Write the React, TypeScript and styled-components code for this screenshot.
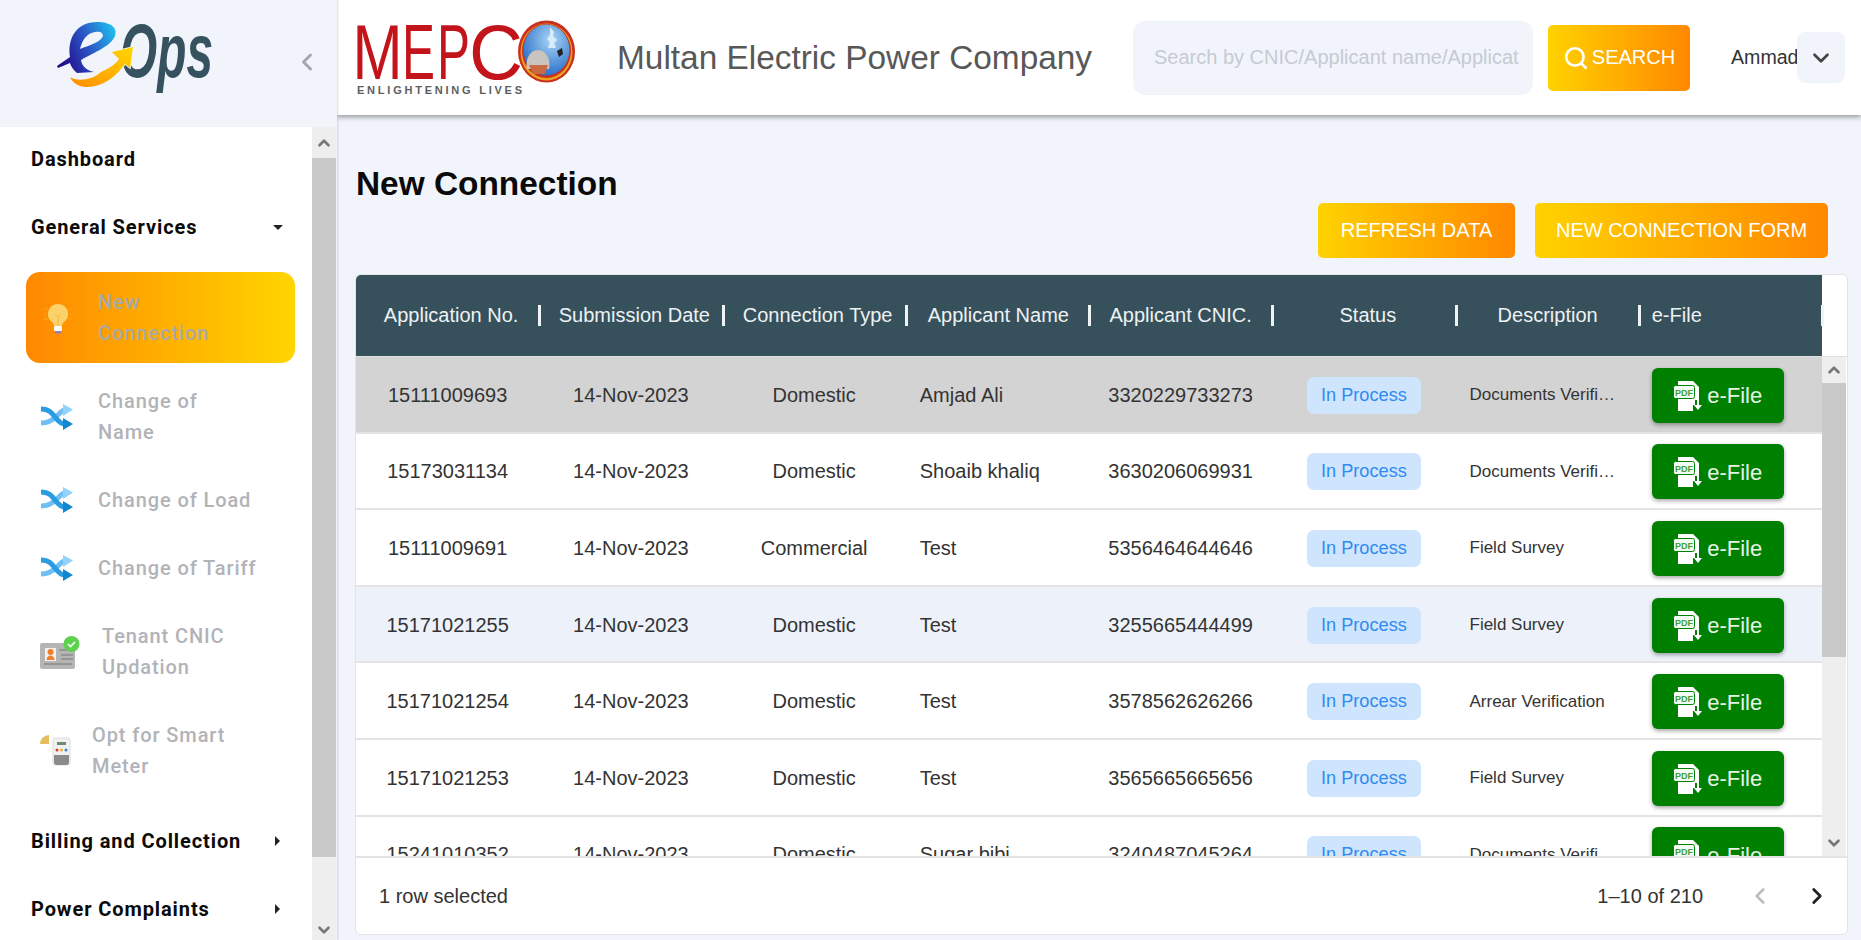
import React from 'react'
import styled, {createGlobalStyle} from 'styled-components'
import {ChevronDown, ChevronLeft, ChevronRight, ChevronUp, Search} from 'lucide-react'

const GlobalStyle = createGlobalStyle`
  html, body, #root { margin: 0; height: 100%; overflow: hidden; }
  body { font-family: "Liberation Sans", Arial, sans-serif; background: #f1f5fb; }
  * { box-sizing: border-box; }
`

const Shell = styled.div`
  display: flex;
  height: 100vh;
`

/* ---------- sidebar ---------- */
const Sidebar = styled.aside`
  width: 337px;
  flex: none;
  display: flex;
  flex-direction: column;
  background: #f1f5fb;
  box-shadow: 1px 0 2px rgba(0, 0, 0, 0.15);
  z-index: 3;
`
const LogoBar = styled.div`
  height: 127px;
  flex: none;
  display: flex;
  align-items: flex-start;
  padding: 18px 0 0 55px;
`
const Collapse = styled.div`
  margin: 30px 0 0 78px;
  color: #a3a7ad;
  display: flex;
`
const SideBody = styled.div`
  flex: 1;
  min-height: 0;
  display: flex;
  padding-right: 1px;
`
const Nav = styled.nav`
  flex: 1;
  background: #fff;
  overflow: hidden;
`
const Track = styled.div`
  width: 24px;
  flex: none;
  display: flex;
  flex-direction: column;
  background: #eeeeee;
  color: #777;
`
const TrackBtn = styled.div<{$h: number}>`
  height: ${p => p.$h}px;
  flex: none;
  display: flex;
  align-items: center;
  justify-content: center;
`
const Thumb = styled.div<{$h: number}>`
  height: ${p => p.$h}px;
  flex: none;
  background: #c9c9c9;
`
const TrackFill = styled.div`
  flex: 1;
`
const Group = styled.div<{$h: number; $mt?: number}>`
  height: ${p => p.$h}px;
  margin-top: ${p => p.$mt ?? 0}px;
  display: flex;
  align-items: center;
  justify-content: space-between;
  padding: 0 30px 0 31px;
  font-family: Roboto, sans-serif;
  font-weight: 700;
  font-size: 20px;
  letter-spacing: 0.9px;
  color: #0b0b0b;
`
const CaretDown = styled.span`
  border-left: 5px solid transparent;
  border-right: 5px solid transparent;
  border-top: 5px solid #222;
  margin-right: -1px;
`
const CaretRight = styled.span`
  border-top: 5px solid transparent;
  border-bottom: 5px solid transparent;
  border-left: 5px solid #222;
  margin-right: 2px;
`
const SubItem = styled.div<{$active?: boolean; $h: number; $slot: number}>`
  height: ${p => p.$h}px;
  margin: ${p => (p.$active ? '11px 17px 4px 26px' : '0 17px 0 26px')};
  display: grid;
  grid-template-columns: ${p => p.$slot}px 1fr;
  align-items: center;
  border-radius: 14px;
  background: ${p => (p.$active ? 'linear-gradient(90deg, #ff8800, #ffd500)' : 'transparent')};
  font-family: Roboto, sans-serif;
  font-weight: 500;
  font-size: 20px;
  line-height: 31px;
  letter-spacing: 0.9px;
  color: ${p => (p.$active ? '#a9a9a9' : '#b2b3b8')};
  white-space: pre-line;
`
const IconSlot = styled.div<{$pl: number}>`
  padding-left: ${p => p.$pl}px;
  display: flex;
  align-items: center;
`

/* ---------- drawn icons ---------- */
const BulbIcon = () => (
  <svg width="30" height="34" viewBox="0 0 30 34">
    <path d="M15 3a10 10 0 0 0-6 18c1.400 1.200 2 2.600 2 4h8c0-1.400.6-2.800 2-4a10 10 0 0 0-6-18z" fill="#fdd26a" />
    <path d="M12 13l3 3 3-3M15 16v9" stroke="#f2b84a" strokeWidth="1" fill="none" />
    <rect x="11" y="25" width="8" height="5" rx="1" fill="#fff" />
    <rect x="12" y="30" width="6" height="2.500" rx="1" fill="#8a7fc0" />
    <path d="M1 8h3M1 13h2M1 18h3M26 8h3M27 13h2M26 18h3" stroke="#f6b94f" strokeWidth="1" strokeDasharray="1 1" />
  </svg>
)
const ShuffleIcon = () => (
  <svg width="32" height="26" viewBox="0 0 32 26">
    <path d="M0 19C8 19 12 16 16 12C19 9 21 6 24 6" stroke="#6fbff5" strokeWidth="5" fill="none" />
    <path d="M22 0L32 5.500L22 12z" fill="#93d3fb" />
    <path d="M0 5C8 5 11 9 14 13C17 17 20 20 24 20" stroke="#2a9de2" strokeWidth="5" fill="none" />
    <path d="M22 14L32 20L22 26z" fill="#0f88d0" />
  </svg>
)
const CardIcon = () => (
  <svg width="40" height="34" viewBox="0 0 40 34">
    <rect x="0" y="8" width="35" height="26" rx="2" fill="#b5b5b5" />
    <rect x="5" y="13" width="11" height="13" fill="#f2f2f2" />
    <circle cx="10.500" cy="17" r="3" fill="#f08030" />
    <path d="M6.500 25c0-3 2-4.500 4-4.500s4 1.500 4 4.500z" fill="#f08030" />
    <path d="M19 15h9M21 20h12M21 24h12M4 29h28" stroke="#959595" strokeWidth="2" />
    <circle cx="31.500" cy="9" r="8" fill="#5ed24f" />
    <path d="M28 9l2.500 2.500 4.500-4.500" stroke="#fff" strokeWidth="1.600" fill="none" />
  </svg>
)
const MeterIcon = () => (
  <svg width="32" height="32" viewBox="0 0 32 32">
    <path d="M0 9a9 9 0 0 1 9-9v9z" fill="#e4bd5c" />
    <rect x="13" y="3" width="17" height="27" rx="2" fill="#f1f1f1" stroke="#ddd" />
    <rect x="17" y="7" width="9" height="3" fill="#6f8a72" />
    <circle cx="17" cy="15" r="1.500" fill="#e53935" />
    <circle cx="21.500" cy="15" r="1.500" fill="#f0b429" />
    <circle cx="26" cy="15" r="1.500" fill="#2f7de1" />
    <path d="M14 20h15v7a3 3 0 0 1-3 3h-9a3 3 0 0 1-3-3z" fill="#8b8b8b" />
  </svg>
)
const PdfIcon = () => (
  <svg width="30" height="31" viewBox="0 0 30 31">
    <path d="M5 1h15l6 6v13h-4v5h-2v6H5z" fill="#fff" />
    <rect x="0.500" y="5.500" width="21" height="13" rx="2" fill="#f4fbf4" stroke="#008000" />
    <text x="11" y="15.500" fontFamily="Liberation Sans, sans-serif" fontSize="9" fontWeight="700" textAnchor="middle" fill="#3f9f3f">PDF</text>
    <path d="M24 19v6h-3l4 5 4-5h-3v-6z" fill="#fff" />
  </svg>
)
const EOpsLogo = () => (
  <svg width="160" height="80" viewBox="0 0 160 80">
    <defs>
      <linearGradient id="eGrad" x1="0" y1="0.6" x2="1" y2="0.2">
        <stop offset="0" stopColor="#230a8c" />
        <stop offset="0.5" stopColor="#2b55c4" />
        <stop offset="1" stopColor="#20bdee" />
      </linearGradient>
      <linearGradient id="arrowGrad" x1="0" y1="1" x2="1" y2="0">
        <stop offset="0" stopColor="#ff8c00" />
        <stop offset="1" stopColor="#ffd800" />
      </linearGradient>
    </defs>
    <text x="65" y="59" fontFamily="Liberation Sans, sans-serif" fontWeight="700" fontStyle="italic" fontSize="76" fill="#35525e" textLength="93" lengthAdjust="spacingAndGlyphs">Ops</text>
    <path fillRule="evenodd" d="M2 48L15 39C12 20 22 4 42 4C56 4 63 10 60 18C56 28 40 34 26 42C27 48 31 52 39 54L22 55C18 52 16 48 15 45L3 50zM25 31C35 27 46 24 48 18C48 14 44 13 40 14C32 15 27 22 25 31z" fill="url(#eGrad)" />
    <path d="M15 59C22 64 38 62 46 54C54 50 60 47 64 41L57 34L78 29L75 50L70 46C60 60 46 70 30 69C22 68 17 64 15 59z" fill="url(#arrowGrad)" stroke="#f1f5fb" strokeWidth="1.500" paintOrder="stroke" />
  </svg>
)

const mepcoLetters = [
  {ch: 'M', x: -4.5, w: 50},
  {ch: 'E', x: 45, w: 33},
  {ch: 'P', x: 80, w: 33},
  {ch: 'C', x: 112, w: 54},
]
const MepcoLogo = () => (
  <svg width="220" height="78" viewBox="0 0 220 78">
    <defs>
      <radialGradient id="sky" cx="0.6" cy="0.3" r="0.8">
        <stop offset="0" stopColor="#a8d5f5" />
        <stop offset="1" stopColor="#1c63c4" />
      </radialGradient>
    </defs>
    {mepcoLetters.map(l => (
      <text key={l.ch} x={l.x} y="59.500" fontFamily="Liberation Sans, sans-serif" fontSize="78" fill="#c4141b" textLength={l.w} lengthAdjust="spacingAndGlyphs">{l.ch}</text>
    ))}
    <ellipse cx="189.500" cy="32.500" rx="28.500" ry="31" fill="#c9301f" />
    <ellipse cx="189.500" cy="33" rx="26" ry="28.500" fill="#e9a21f" />
    <ellipse cx="189.500" cy="32" rx="24.500" ry="27" fill="#c9301f" />
    <ellipse cx="189.500" cy="31" rx="23" ry="25.500" fill="url(#sky)" />
    <path d="M193 8l4 5-1 4 4 4-3 3 2 5h-8l2-6-3-3 3-4z" fill="#d8ecfa" />
    <path d="M170 50c-2-10 3-19 11-19s13 9 11 19z" fill="#c9c4bd" />
    <path d="M172 46h19l-3 9h-12z" fill="#c96a45" />
    <path d="M200 32l5-3 1 6-4 3z" fill="#222" />
    <text x="0" y="74.500" fontFamily="Liberation Sans, sans-serif" fontSize="11" fontWeight="700" fill="#5c5f61" textLength="165">ENLIGHTENING LIVES</text>
  </svg>
)

/* ---------- header ---------- */
const Main = styled.main`
  flex: 1;
  min-width: 0;
  display: flex;
  flex-direction: column;
`
const TopBar = styled.header`
  height: 115px;
  flex: none;
  display: flex;
  align-items: center;
  padding: 0 16px 0 20px;
  background: #fff;
  box-shadow: 0 2px 5px rgba(0, 0, 0, 0.4);
  z-index: 2;
  & > svg { flex: none; }
`
const Company = styled.h2`
  margin: 0 0 0 40px;
  flex: 1;
  min-width: 0;
  font-weight: 400;
  font-size: 33.4px;
  color: #585858;
  white-space: nowrap;
`
const SearchInput = styled.input`
  width: 400px;
  height: 74px;
  flex: none;
  border: 0;
  outline: 0;
  border-radius: 12px;
  background: #f1f5fb;
  padding: 0 14px 0 21px;
  font: 20px "Liberation Sans", sans-serif;
  &::placeholder { color: #c6cad3; opacity: 1; }
`
const GradButton = styled.button<{$w: number; $h: number}>`
  width: ${p => p.$w}px;
  height: ${p => p.$h}px;
  flex: none;
  border: 0;
  padding: 0;
  border-radius: 5px;
  display: flex;
  align-items: center;
  justify-content: center;
  gap: 3px;
  background: linear-gradient(90deg, #ffd200, #ff8800);
  color: #fff;
  font: 20px "Liberation Sans", sans-serif;
`
const SearchButton = styled(GradButton)`
  margin-left: 15px;
`
const UserName = styled.span`
  margin-left: 41px;
  font-size: 19.6px;
  color: #333;
  width: 66px;
  white-space: nowrap;
`
const UserMenu = styled.div`
  width: 48px;
  height: 51px;
  flex: none;
  border-radius: 8px;
  background: #f1f5fb;
  color: #444;
  display: flex;
  align-items: center;
  justify-content: center;
`

/* ---------- content ---------- */
const Content = styled.section`
  flex: 1;
  min-height: 0;
  display: flex;
  flex-direction: column;
  padding: 49px 13px 5px 18px;
`
const Title = styled.h1`
  margin: 0;
  padding-left: 1px;
  height: 39px;
  line-height: 39px;
  font-size: 33.4px;
  font-weight: 700;
  color: #0a0a0a;
`
const Actions = styled.div`
  display: flex;
  justify-content: flex-end;
  gap: 20px;
  padding-right: 20px;
  margin-bottom: 16px;
`
const Card = styled.div`
  flex: 1;
  min-height: 0;
  display: flex;
  flex-direction: column;
  background: #fff;
  border: 1px solid #e2e4e8;
  border-radius: 6px;
  overflow: hidden;
`
const HeadRow = styled.div`
  height: 82px;
  flex: none;
  display: flex;
  border-bottom: 1px solid #e0e0e0;
`
const HeadGrid = styled.div`
  width: 1466px;
  flex: none;
  display: grid;
  grid-template-columns: repeat(8, 1fr);
  background: #36505c;
  color: #eef2f3;
  font-size: 20px;
`
const HeadCell = styled.div<{$left?: boolean; $shift: number}>`
  display: flex;
  align-items: center;
  min-width: 0;
  & > span {
    flex: 1;
    text-align: ${p => (p.$left ? 'left' : 'center')};
    padding-left: ${p => p.$shift}px;
    white-space: nowrap;
  }
`
const Sep = styled.i`
  width: 3px;
  height: 21px;
  flex: none;
  margin-right: -2px;
  background: #f0f3f4;
`
const Body = styled.div`
  flex: 1;
  min-height: 0;
  display: flex;
`
const Rows = styled.div`
  width: 1466px;
  flex: none;
  overflow: hidden;
`
const Row = styled.div<{$tone?: 'selected' | 'hover'}>`
  height: 76.6px;
  padding-top: 2px;
  display: grid;
  grid-template-columns: repeat(8, 1fr);
  align-items: center;
  border-bottom: 2px solid #e4e4e4;
  background: ${p => (p.$tone === 'selected' ? '#d3d3d3' : p.$tone === 'hover' ? '#edf2fa' : '#fff')};
  color: #333;
  font-size: 20px;
`
const Cell = styled.div<{$left?: boolean}>`
  text-align: ${p => (p.$left ? 'left' : 'center')};
  padding-left: ${p => (p.$left ? '14px' : '0')};
  white-space: nowrap;
`
const Chip = styled.span`
  display: block;
  width: 114px;
  height: 37px;
  margin: 0 auto;
  border-radius: 7px;
  background: #cfe5fd;
  color: #2f8bf0;
  font-size: 18.2px;
  line-height: 37px;
  text-align: center;
`
const Desc = styled.div`
  padding-left: 14px;
  width: 164px;
  font-size: 17px;
  color: #333;
  white-space: nowrap;
  overflow: hidden;
  text-overflow: ellipsis;
`
const EFileButton = styled.button`
  width: 132px;
  height: 55px;
  margin-left: 13px;
  border: 0;
  border-radius: 6px;
  background: #008000;
  box-shadow: 0 2px 4px rgba(0, 0, 0, 0.35);
  color: #e6f4e6;
  font: 22px "Liberation Sans", sans-serif;
  display: flex;
  align-items: center;
  justify-content: center;
  gap: 4px;
  & > span { padding-top: 2px; }
`
const Footer = styled.footer`
  height: 78px;
  flex: none;
  display: flex;
  align-items: center;
  justify-content: space-between;
  border-top: 2px solid #e4e4e4;
  padding: 0 17px 0 23px;
  font-size: 20px;
  color: #333;
`
const Pager = styled.div`
  display: flex;
  align-items: center;
`
const PagerBtn = styled.span<{$off?: boolean}>`
  display: flex;
  margin-left: ${p => (p.$off ? '44px' : '31px')};
  color: ${p => (p.$off ? '#bdbdbd' : '#222')};
`

const columns = [
  {label: 'Application No.', shift: 8},
  {label: 'Submission Date', shift: 8},
  {label: 'Connection Type', shift: 8},
  {label: 'Applicant Name', shift: 3},
  {label: 'Applicant CNIC.', shift: 1},
  {label: 'Status', shift: 9},
  {label: 'Description', shift: 2},
  {label: 'e-File', shift: 13},
]

const rows = [
  {no: '15111009693', type: 'Domestic', name: 'Amjad Ali', cnic: '3320229733273', desc: 'Documents Verification', tone: 'selected' as const},
  {no: '15173031134', type: 'Domestic', name: 'Shoaib khaliq', cnic: '3630206069931', desc: 'Documents Verification'},
  {no: '15111009691', type: 'Commercial', name: 'Test', cnic: '5356464644646', desc: 'Field Survey'},
  {no: '15171021255', type: 'Domestic', name: 'Test', cnic: '3255665444499', desc: 'Field Survey', tone: 'hover' as const},
  {no: '15171021254', type: 'Domestic', name: 'Test', cnic: '3578562626266', desc: 'Arrear Verification'},
  {no: '15171021253', type: 'Domestic', name: 'Test', cnic: '3565665665656', desc: 'Field Survey'},
  {no: '15241010352', type: 'Domestic', name: 'Sugar bibi', cnic: '3240487045264', desc: 'Documents Verification'},
]

const App = () => (
  <Shell>
    <GlobalStyle />
    <Sidebar>
      <LogoBar>
        <EOpsLogo />
        <Collapse><ChevronLeft size={28} strokeWidth={2.5} /></Collapse>
      </LogoBar>
      <SideBody>
        <Nav>
          <Group $h={64}>Dashboard</Group>
          <Group $h={68} $mt={2}>General Services<CaretDown /></Group>
          <SubItem $active $h={91} $slot={72}><IconSlot $pl={17}><BulbIcon /></IconSlot>{'New\nConnection'}</SubItem>
          <SubItem $h={99} $slot={72}><IconSlot $pl={15}><ShuffleIcon /></IconSlot>{'Change of\nName'}</SubItem>
          <SubItem $h={68} $slot={72}><IconSlot $pl={15}><ShuffleIcon /></IconSlot>Change of Load</SubItem>
          <SubItem $h={68} $slot={72}><IconSlot $pl={15}><ShuffleIcon /></IconSlot>Change of Tariff</SubItem>
          <SubItem $h={99} $slot={76}><IconSlot $pl={14}><CardIcon /></IconSlot>{'Tenant CNIC\nUpdation'}</SubItem>
          <SubItem $h={99} $slot={66}><IconSlot $pl={14}><MeterIcon /></IconSlot>{'Opt for Smart\nMeter'}</SubItem>
          <Group $h={68} $mt={7}>Billing and Collection<CaretRight /></Group>
          <Group $h={68}>Power Complaints<CaretRight /></Group>
        </Nav>
        <Track>
          <TrackBtn $h={31}><ChevronUp size={18} strokeWidth={3.5} /></TrackBtn>
          <Thumb $h={699} />
          <TrackFill />
          <TrackBtn $h={20}><ChevronDown size={18} strokeWidth={3.5} /></TrackBtn>
        </Track>
      </SideBody>
    </Sidebar>
    <Main>
      <TopBar>
        <MepcoLogo />
        <Company>Multan Electric Power Company</Company>
        <SearchInput placeholder="Search by CNIC/Applicant name/Application No" />
        <SearchButton $w={142} $h={66}><Search size={26} strokeWidth={2.4} />SEARCH</SearchButton>
        <UserName>Ammad</UserName>
        <UserMenu><ChevronDown size={26} strokeWidth={2.5} /></UserMenu>
      </TopBar>
      <Content>
        <Title>New Connection</Title>
        <Actions>
          <GradButton $w={197} $h={55}>REFRESH DATA</GradButton>
          <GradButton $w={293} $h={55}>NEW CONNECTION FORM</GradButton>
        </Actions>
        <Card>
          <HeadRow>
            <HeadGrid>
              {columns.map((c, i) => (
                <HeadCell key={c.label} $left={i === 7} $shift={c.shift}><span>{c.label}</span><Sep /></HeadCell>
              ))}
            </HeadGrid>
          </HeadRow>
          <Body>
            <Rows>
              {rows.map(r => (
                <Row key={r.no} $tone={r.tone}>
                  <Cell>{r.no}</Cell>
                  <Cell>14-Nov-2023</Cell>
                  <Cell>{r.type}</Cell>
                  <Cell $left>{r.name}</Cell>
                  <Cell>{r.cnic}</Cell>
                  <Chip>In Process</Chip>
                  <Desc>{r.desc}</Desc>
                  <EFileButton><PdfIcon /><span>e-File</span></EFileButton>
                </Row>
              ))}
            </Rows>
            <Track>
              <TrackBtn $h={26}><ChevronUp size={18} strokeWidth={3.5} /></TrackBtn>
              <Thumb $h={274} />
              <TrackFill />
              <TrackBtn $h={26}><ChevronDown size={18} strokeWidth={3.5} /></TrackBtn>
            </Track>
          </Body>
          <Footer>
            <span>1 row selected</span>
            <Pager>
              1–10 of 210
              <PagerBtn $off><ChevronLeft size={26} strokeWidth={2.4} /></PagerBtn>
              <PagerBtn><ChevronRight size={26} strokeWidth={2.6} /></PagerBtn>
            </Pager>
          </Footer>
        </Card>
      </Content>
    </Main>
  </Shell>
)

export default App
